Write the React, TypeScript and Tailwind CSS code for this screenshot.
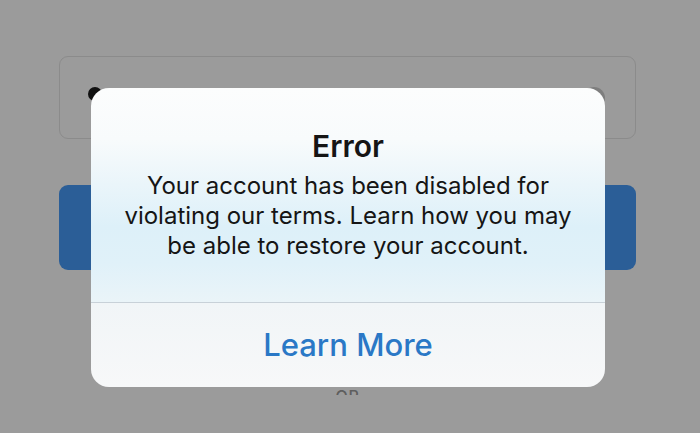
export default function App() {
  return (
    <div
      className="relative w-[700px] h-[433px] overflow-hidden bg-[#9b9b9b]"
      style={{ fontFamily: "Inter, 'Noto Sans', sans-serif" }}
    >
      {/* Page behind the alert */}
      <div className="flex flex-col pl-[59px] pr-[64px] pt-[56px]">
        <div className="relative h-[83px] rounded-[9px] border border-[#8b8b8b]">
          <span className="absolute left-[28px] top-[30px] h-[14px] w-[14px] rounded-full bg-[#111]" />
          <span className="absolute right-[30px] top-[30px] h-[22px] w-[22px] rounded-full bg-[#7e7e7e]" />
        </div>
        <div className="mt-[46px] h-[85px] rounded-[9px] bg-[#2b5e97]" />
        <div className="mt-[116px] flex h-[9px] justify-center overflow-hidden">
          <span className="text-[16px] font-medium leading-[20px] tracking-wider text-[#5e5e5e]">OR</span>
        </div>
      </div>

      {/* Alert */}
      <div className="absolute left-[91px] top-[88px] flex h-[299px] w-[514px] flex-col overflow-hidden rounded-[18px]">
        <div className="flex h-[214px] flex-col items-center bg-[linear-gradient(to_bottom,#fcfdfd_0%,#f8fbfc_24%,#eaf5fa_45%,#ddf0f9_65%,#e0f1f9_82%,#eaf4f8_100%)] pt-[41px] text-center text-[#151515]">
          <div className="text-[30px] font-semibold leading-[34px]">Error</div>
          <p className="mt-[8px] text-[24px] leading-[30px]">
            Your account has been disabled for
            <br />
            violating our terms. Learn how you may
            <br />
            be able to restore your account.
          </p>
        </div>
        <div className="h-px bg-[#c8d1d8]" />
        <div className="flex flex-1 items-center justify-center bg-[linear-gradient(to_bottom,#f1f5f7,#f7f8f9)]">
          <span className="text-[31px] font-medium leading-[36px] text-[#2a78c6]">Learn More</span>
        </div>
      </div>
    </div>
  )
}
